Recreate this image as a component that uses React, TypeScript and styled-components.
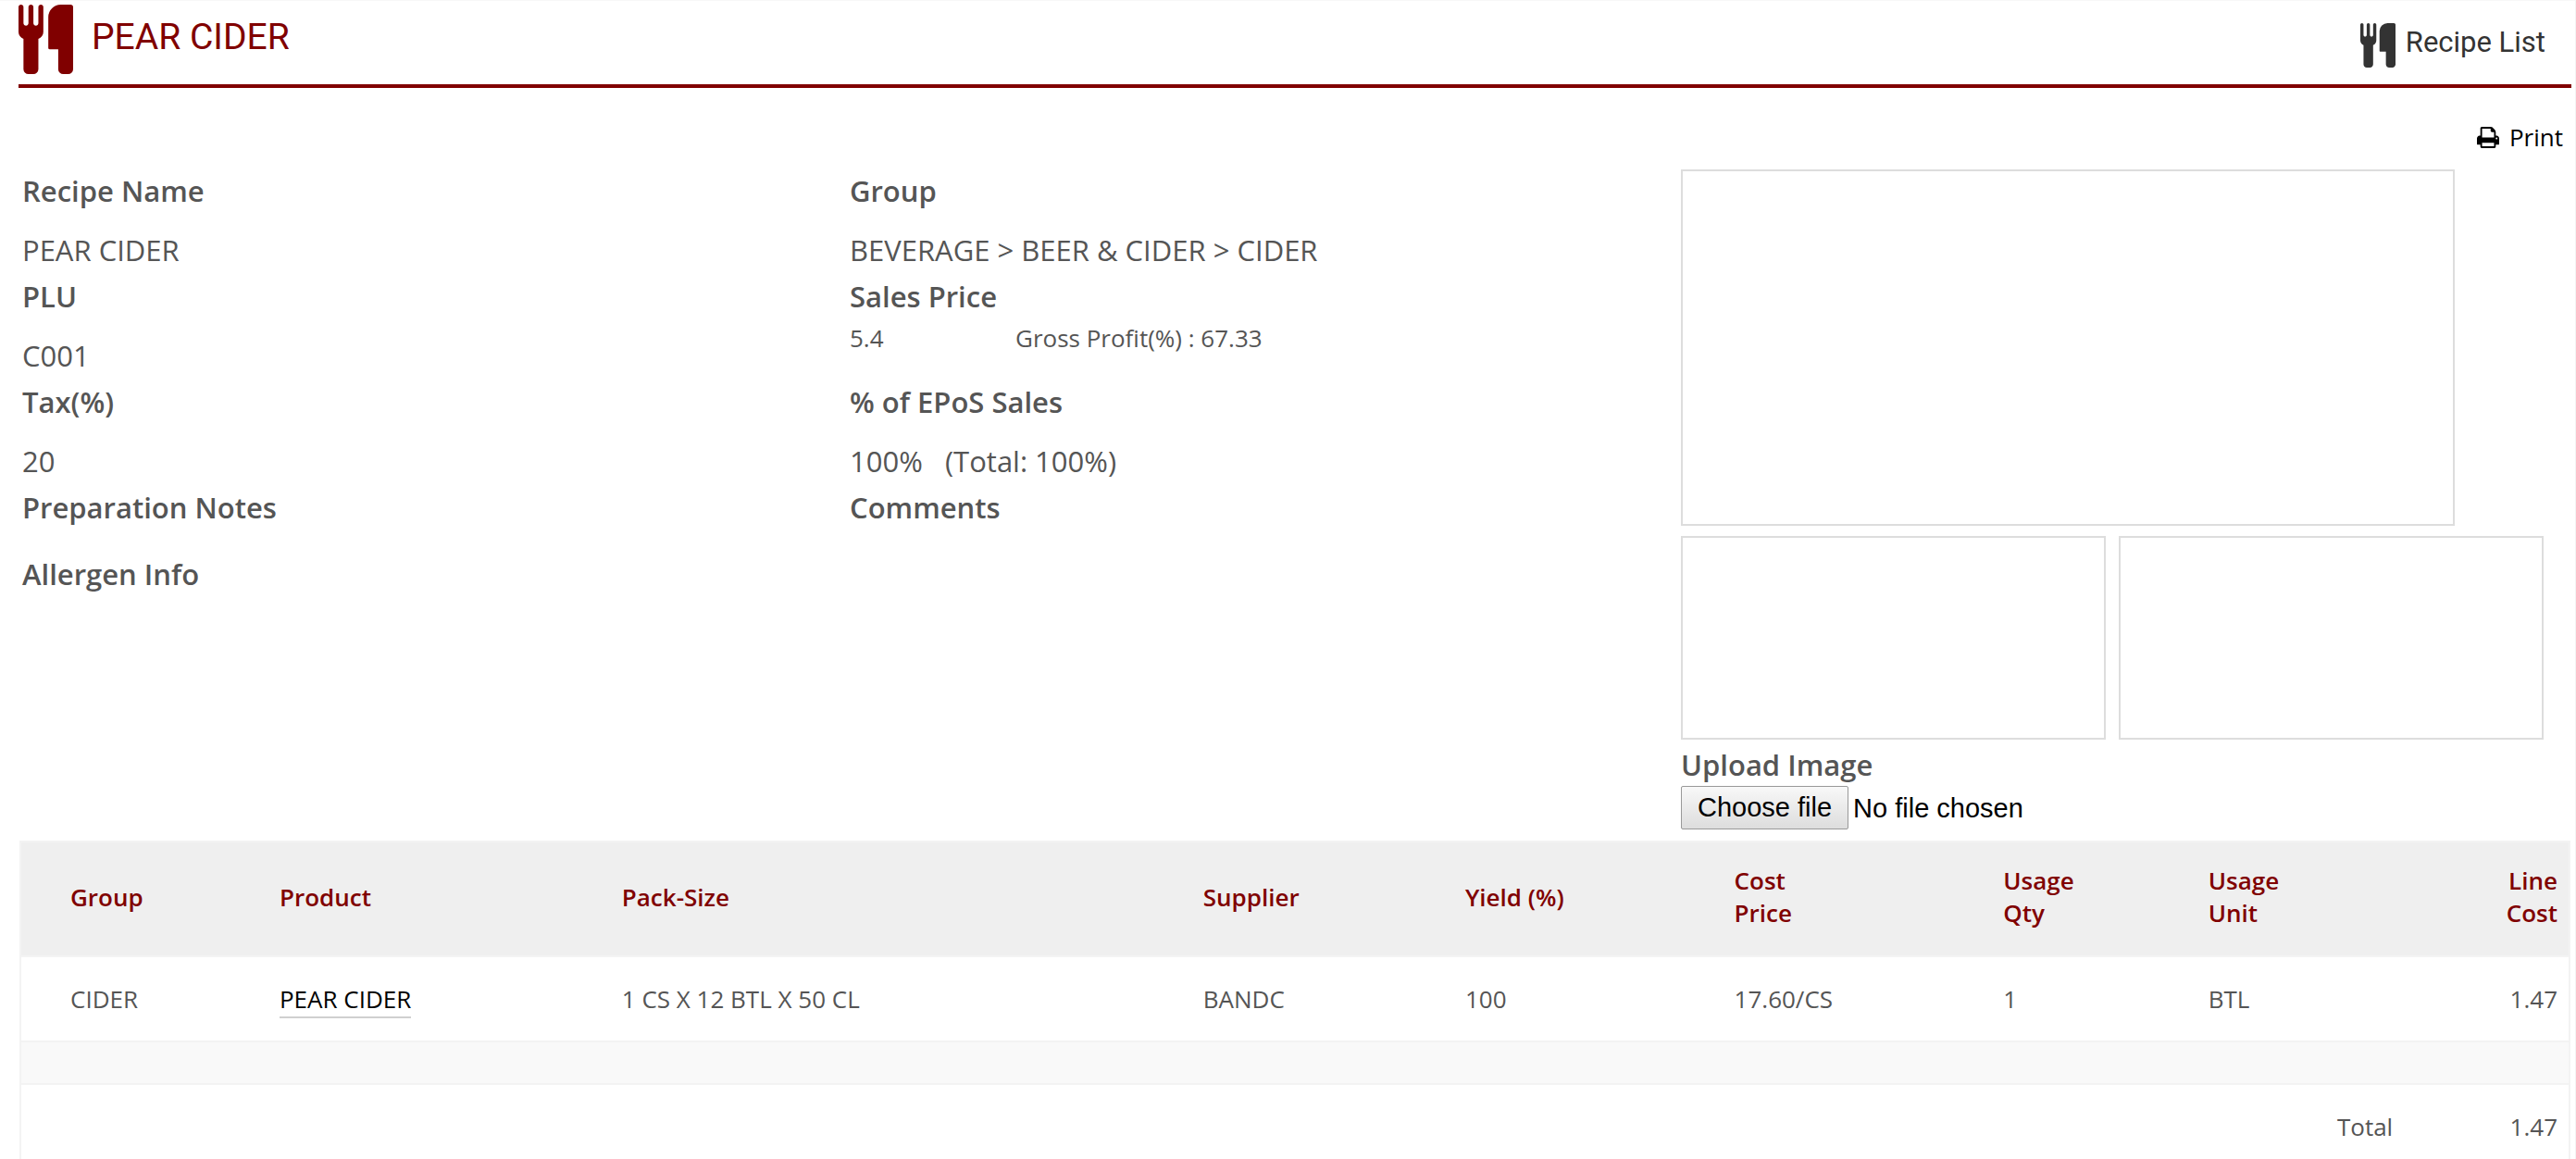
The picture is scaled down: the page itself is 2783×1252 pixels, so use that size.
import React from 'react';
import styled, { createGlobalStyle } from 'styled-components';

const maroon = '#800000';
const line = '#f3f3f3';

const GlobalStyle = createGlobalStyle`
  *, *::before, *::after { box-sizing: border-box; }
  body {
    margin: 0;
    background: #fff;
    color: #555;
    font-family: 'Open Sans', 'Noto Sans', sans-serif;
    font-size: 26px;
    line-height: 35px;
  }
`;

const Page = styled.div`
  min-height: 100vh;
  padding: 0 4px 0 20px;
  border-top: 1px solid #f8f8f8;
  border-right: 1px solid #f3f3f3;
  overflow: hidden;
`;

const Header = styled.header`
  display: flex;
  justify-content: space-between;
  align-items: flex-start;
  height: 94px;
  padding: 4px 28px 0 0;
  border-bottom: 4px solid ${maroon};
`;

const TitleGroup = styled.div`
  display: flex;
  gap: 20px;
  color: ${maroon};
`;

const Title = styled.h1`
  margin: 11px 0 0;
  font: 400 39px/48px Roboto, sans-serif;
`;

const ListLink = styled.a`
  display: flex;
  align-items: flex-start;
  gap: 11px;
  margin-top: 20px;
  color: #333;
  font: 400 31px/42px Roboto, sans-serif;
  text-decoration: none;
`;

const PrintBar = styled.div`
  display: flex;
  justify-content: flex-end;
  height: 88px;
  padding: 36px 9px 0 0;
`;

const PrintButton = styled.button`
  display: flex;
  align-items: center;
  align-self: flex-start;
  gap: 11px;
  padding: 0;
  border: 0;
  background: none;
  color: #000;
  font: inherit;
  cursor: pointer;
`;

const Details = styled.section`
  display: grid;
  grid-template-columns: 894fr 902fr 962fr;
  min-height: 725px;
`;

const Fields = styled.dl`
  margin: 0;
  padding-left: 4px;
  font-size: 31px;
  line-height: 54px;
`;

const Label = styled.dt`
  font-weight: 600;
  line-height: 46px;
`;

const Value = styled.dd`
  min-height: 26px;
  margin: 0;
  padding-top: 14px;
`;

const PriceRow = styled.dd`
  display: grid;
  grid-template-columns: 179px 1fr;
  height: 68px;
  margin: 0;
  font-size: 26px;
  line-height: 44px;
`;

const Images = styled.div`
  display: flex;
  flex-direction: column;
  padding-right: 30px;
`;

const MainImage = styled.div`
  width: 89.7%;
  height: 385px;
  border: 2px solid #ddd;
`;

const Thumbs = styled.div`
  display: grid;
  grid-template-columns: 1fr 1fr;
  gap: 14px;
  margin-top: 11px;
`;

const Thumb = styled.div`
  height: 220px;
  border: 2px solid #ddd;
`;

const UploadLabel = styled.label`
  margin-top: 4px;
  font-size: 31px;
  font-weight: 600;
  line-height: 46px;
`;

const FilePicker = styled.label`
  position: relative;
  display: flex;
  align-items: center;
  align-self: flex-start;
  gap: 5px;
  color: #000;
  font: 29px/32px 'Liberation Sans', Arial, sans-serif;
  cursor: pointer;
`;

const FileInput = styled.input`
  position: absolute;
  inset: 0;
  width: 100%;
  opacity: 0;
`;

const FileButton = styled.span`
  padding: 6px 17px 7px;
  border: 1px solid #999;
  border-radius: 2px;
  background: linear-gradient(#f8f8f8, #ddd);
`;

const TableWrap = styled.div`
  padding: 0 1px;
`;

const Ingredients = styled.table`
  width: 100%;
  table-layout: fixed;
  border-collapse: separate;
  border-spacing: 0;
  border: 2px solid ${line};
  border-bottom: 0;
  text-align: left;
`;

const Cell = styled.td<{ $end?: boolean }>`
  height: 92px;
  padding: 0 12px;
  border-bottom: 2px solid ${line};
  text-align: ${p => (p.$end ? 'right' : 'left')};
  &:first-child { padding-left: 53px; }
`;

const HeadCell = styled(Cell).attrs({ as: 'th', scope: 'col' })`
  height: 124px;
  padding: 0 12px 4px;
  background: #efefef;
  color: ${maroon};
  font-weight: 600;
`;

const SpacerCell = styled.td`
  height: 46px;
  padding: 0;
  border-bottom: 2px solid ${line};
  background: #f9f9f9;
`;

const ProductLink = styled.a`
  padding-bottom: 1px;
  border-bottom: 2px solid #d0d0d0;
  color: #000;
  text-decoration: none;
`;

function Cutlery({ width, height }: { width: number; height: number }) {
  return (
    <svg width={width} height={height} viewBox="0 0 1408 1792" preserveAspectRatio="none" fill="currentColor" aria-hidden="true">
      <path d="M640 64v640q0 61-35.500 111t-92.500 70v779q0 52-38 90t-90 38h-128q-52 0-90-38t-38-90v-779q-57-20-92.500-70t-35.500-111v-640q0-26 19-45t45-19 45 19 19 45v416q0 26 19 45t45 19 45-19 19-45v-416q0-26 19-45t45-19 45 19 19 45v416q0 26 19 45t45 19 45-19 19-45v-416q0-26 19-45t45-19 45 19 19 45zM1408 64v1600q0 52-38 90t-90 38h-128q-52 0-90-38t-38-90v-512h-224q-13 0-22.500-9.500t-9.500-22.500v-800q0-132 94-226t226-94h256q26 0 45 19t19 45z" />
    </svg>
  );
}

function Printer() {
  return (
    <svg width="24" height="23" viewBox="0 0 1664 1536" preserveAspectRatio="none" fill="currentColor" aria-hidden="true">
      <path d="M384 1408h896v-256h-896v256zM384 768h896v-384h-160q-40 0-68-28t-28-68v-160h-640v640zM1536 832q0-26-19-45t-45-19-45 19-19 45 19 45 45 19 45-19 19-45zM1664 832v416q0 13-9.500 22.500t-22.500 9.500h-224v160q0 40-28 68t-68 28h-960q-40 0-68-28t-28-68v-160h-224q-13 0-22.500-9.500t-9.500-22.500v-416q0-79 56.500-135.500t135.500-56.500h64v-544q0-40 28-68t68-28h672q40 0 88 20t76 48l152 152q28 28 48 76t20 88v256h64q79 0 135.500 56.500t56.500 135.500z" />
    </svg>
  );
}

const columns = [
  { name: 'Group', width: '9.7%' },
  { name: 'Product', width: '13.44%' },
  { name: 'Pack-Size', width: '22.82%' },
  { name: 'Supplier', width: '10.29%' },
  { name: 'Yield (%)', width: '10.56%' },
  { name: 'Cost Price', width: '10.56%' },
  { name: 'Usage Qty', width: '8.05%' },
  { name: 'Usage Unit', width: '8.12%' },
  { name: 'Line Cost', width: '6.46%' },
];

const rows = [
  ['CIDER', 'PEAR CIDER', '1 CS X 12 BTL X 50 CL', 'BANDC', '100', '17.60/CS', '1', 'BTL', '1.47'],
];

function heading(name: string) {
  const [first, second] = name.split(' ');
  return second && !second.startsWith('(') ? <>{first}<br />{second}</> : name;
}

export default function App() {
  return (
    <Page>
      <GlobalStyle />
      <Header>
        <TitleGroup>
          <Cutlery width={59} height={75} />
          <Title>PEAR CIDER</Title>
        </TitleGroup>
        <ListLink href="#recipes">
          <Cutlery width={38} height={48} />
          Recipe List
        </ListLink>
      </Header>
      <PrintBar>
        <PrintButton type="button">
          <Printer />
          Print
        </PrintButton>
      </PrintBar>
      <Details>
        <Fields>
          <Label>Recipe Name</Label>
          <Value>PEAR CIDER</Value>
          <Label>PLU</Label>
          <Value>C001</Value>
          <Label>Tax(%)</Label>
          <Value>20</Value>
          <Label>Preparation Notes</Label>
          <Value />
          <Label>Allergen Info</Label>
        </Fields>
        <Fields>
          <Label>Group</Label>
          <Value>BEVERAGE &gt; BEER &amp; CIDER &gt; CIDER</Value>
          <Label>Sales Price</Label>
          <PriceRow>
            <span>5.4</span>
            <span>Gross Profit(%) : 67.33</span>
          </PriceRow>
          <Label>% of EPoS Sales</Label>
          <Value>100% &nbsp; (Total: 100%)</Value>
          <Label>Comments</Label>
        </Fields>
        <Images>
          <MainImage />
          <Thumbs>
            <Thumb />
            <Thumb />
          </Thumbs>
          <UploadLabel htmlFor="recipe-image">Upload Image</UploadLabel>
          <FilePicker>
            <FileButton>Choose file</FileButton>
            No file chosen
            <FileInput id="recipe-image" type="file" />
          </FilePicker>
        </Images>
      </Details>
      <TableWrap>
        <Ingredients>
          <colgroup>
            {columns.map(c => <col key={c.name} style={{ width: c.width }} />)}
          </colgroup>
          <thead>
            <tr>
              {columns.map((c, i) => (
                <HeadCell key={c.name} $end={i === 8}>{heading(c.name)}</HeadCell>
              ))}
            </tr>
          </thead>
          <tbody>
            {rows.map(row => (
              <tr key={row[1]}>
                {row.map((text, i) => (
                  <Cell key={i} $end={i === 8}>
                    {i === 1 ? <ProductLink href="#product">{text}</ProductLink> : text}
                  </Cell>
                ))}
              </tr>
            ))}
            <tr><SpacerCell colSpan={9} /></tr>
          </tbody>
          <tfoot>
            <tr>
              <Cell colSpan={8} $end>Total</Cell>
              <Cell $end>1.47</Cell>
            </tr>
          </tfoot>
        </Ingredients>
      </TableWrap>
    </Page>
  );
}
